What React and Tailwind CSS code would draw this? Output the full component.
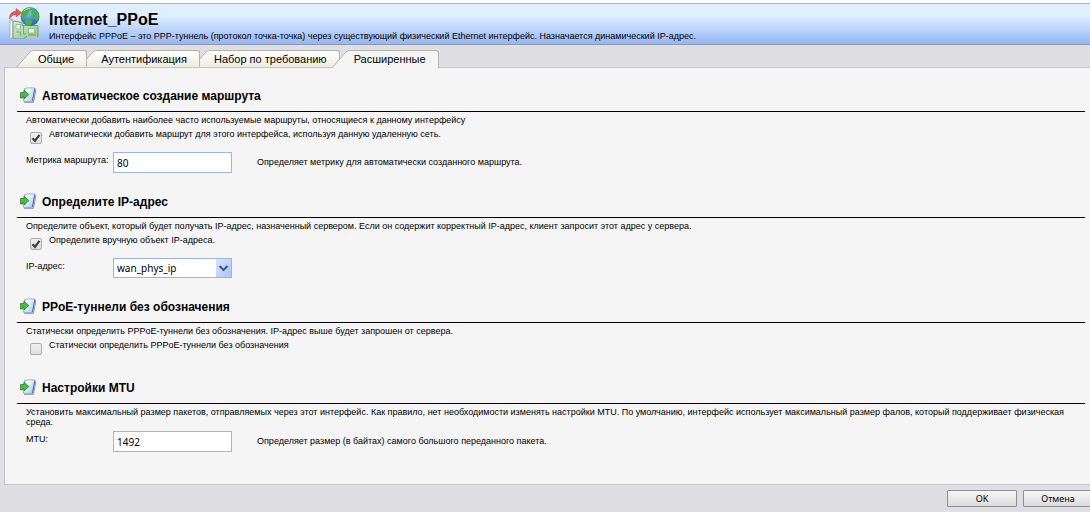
import { useState } from 'react';

const tabs = ['Общие', 'Аутентификация', 'Набор по требованию', 'Расширенные'];

function InterfaceIcon() {
  return (
    <svg width="32" height="33" viewBox="0 0 32 33" className="shrink-0" aria-hidden="true">
      <defs>
        <radialGradient id="globe" cx="0.4" cy="0.3" r="0.8">
          <stop offset="0" stopColor="#8fc4ee" />
          <stop offset="0.5" stopColor="#4a86c8" />
          <stop offset="1" stopColor="#28568f" />
        </radialGradient>
        <linearGradient id="card" x1="0" y1="0" x2="1" y2="1">
          <stop offset="0" stopColor="#d9efd4" />
          <stop offset="1" stopColor="#8cc48c" />
        </linearGradient>
      </defs>
      <path d="M4 14l9 1.500v3h16v11H17.500l-1 1.500H4z" fill="url(#card)" stroke="#69a56c" />
      <path d="M1 12.500h2.500v18.500H1z" fill="#fbfcfb" stroke="#9aa79c" strokeWidth="0.8" />
      <path d="M7 17.500h4.500v4.500H7zM19.500 21.500h6v4.500h-6z" fill="#f3fbf0" stroke="#82b884" strokeWidth="0.8" />
      <path d="M7 25h4.500v3.500M14.500 18v9h2.500M19 28h8" fill="none" stroke="#5fa565" strokeWidth="0.8" />
      <path d="M5 30.500h10M18 29.500h10" stroke="#d8d48c" strokeWidth="0.8" />
      <circle cx="21" cy="9.500" r="9.500" fill="url(#globe)" />
      <path
        d="M12.500 6C14 2.500 17 .5 21 .3l2 2.200-3 1.500-.5 3-3 2.500-2 2.500-2-2zM16 12.500l4-.5 3 2.500-1 3.500-3 .5-3-2.500zM24 2c4 1 6 4.500 6.200 8l-2.200 3.500-3.500-2 .5-3.500-3-2z"
        fill="#46b648"
      />
      <path d="M15 4c2-2 4-2.500 6-2.500" fill="none" stroke="#b9eab0" />
      <path d="M.5 12C0 7 3.500 4.200 7 4.200V1.500l5.500 4.300L7 10V7.500C4 7.300 2.500 9 .5 12z" fill="#e8564e" stroke="#c03a34" strokeWidth="0.5" />
    </svg>
  );
}

function SectionIcon() {
  return (
    <svg width="17" height="17" viewBox="0 0 17 17" className="-mr-px shrink-0" aria-hidden="true">
      <defs>
        <linearGradient id="page" x1="0" y1="0" x2="1" y2="1">
          <stop offset="0.2" stopColor="#ffffff" />
          <stop offset="1" stopColor="#9cc0f4" />
        </linearGradient>
      </defs>
      <path d="M15.800 2.500L13.500 15.300H4" fill="none" stroke="#8d93a0" />
      <path d="M4.500 1.500c3-.8 7-.8 10.500-.3L12.500 14.200c-3 .6-6 .6-9 0z" fill="url(#page)" stroke="#8aa5d4" strokeWidth="0.9" />
      <path d="M14.800 1.600l-2.400 12.600" fill="none" stroke="#4a70ba" />
      <path d="M.5 5.500h3.500V3l4.800 4.500L4 12V9.500H2.500V11h-2z" fill="#4cbb3f" stroke="#248528" strokeWidth="0.8" />
    </svg>
  );
}

function Tab({ label, active, className, onClick }) {
  const fill = active ? '#f5f5f5' : 'url(#tabFill)';
  return (
    <button
      type="button"
      role="tab"
      aria-selected={active}
      onClick={onClick}
      className={`flex text-[11px] leading-4 ${active ? '-mb-px h-[18px]' : 'h-[17px]'} ${className}`}
    >
      <svg
        width="18"
        height="18"
        viewBox="0 0 18 18"
        className="h-full shrink-0"
        preserveAspectRatio="xMidYMin slice"
        aria-hidden="true"
      >
        <defs>
          <linearGradient id="tabFill" x1="0" y1="0" x2="0" y2="1">
            <stop offset="0" stopColor="#ffffff" />
            <stop offset="1" stopColor="#eeeddf" />
          </linearGradient>
        </defs>
        <path d="M0 18L13 3Q15 .5 18 .5V18z" fill={fill} />
        <path d="M0 18L13 3Q15 .5 18 .5" fill="none" stroke="#b4b4ac" />
      </svg>
      <span
        className={`h-full rounded-tr-[3px] border-t border-r border-[#b4b4ac] pr-3 pl-1 whitespace-nowrap ${
          active ? 'bg-[#f5f5f5]' : 'bg-linear-to-b from-white to-[#eeeddf]'
        }`}
      >
        {label}
      </span>
    </button>
  );
}

function Section({ title, description, children }) {
  return (
    <section>
      <h2 className="flex h-7 items-start gap-[6px] border-b border-black pt-[3px] pl-[3px] text-[12px] leading-[18px] font-bold">
        <SectionIcon />
        {title}
      </h2>
      <div className="pl-[9px]">
        <p className="pt-[3px]">{description}</p>
        {children}
      </div>
    </section>
  );
}

function Check({ id, label, defaultChecked }) {
  return (
    <div className="mt-1 flex gap-[7px] pb-1 pl-1">
      <span className="relative mt-[3px] h-3 w-3">
        <input
          id={id}
          type="checkbox"
          defaultChecked={defaultChecked}
          className="peer block h-3 w-3 appearance-none rounded-[2px] border border-[#acacac] bg-linear-to-b from-[#f0f0f0] to-[#dedede]"
        />
        <svg
          viewBox="0 0 12 12"
          className="pointer-events-none absolute inset-0 hidden h-3 w-3 peer-checked:block"
          aria-hidden="true"
        >
          <path d="M2.500 6.200L5 8.800L9.500 2.800" fill="none" stroke="#3c3c3c" strokeWidth="2.200" />
        </svg>
      </span>
      <label htmlFor={id}>{label}</label>
    </div>
  );
}

function Field({ id, label, help, children }) {
  return (
    <div className="mt-1 flex">
      <label htmlFor={id} className="w-[87px] shrink-0 pt-[3px] whitespace-nowrap">
        {label}
      </label>
      {children}
      {help && <span className="pt-[5px] pl-[25px]">{help}</span>}
    </div>
  );
}

function TextBox({ id, defaultValue }) {
  return (
    <input
      id={id}
      type="text"
      defaultValue={defaultValue}
      className="h-[21px] w-[119px] border border-[#9cb7e4] bg-white px-[3px] font-['Noto_Sans',sans-serif] text-[10px] outline-none"
    />
  );
}

export default function App() {
  const [current, setCurrent] = useState(3);

  return (
    <div className="min-h-screen overflow-hidden bg-[#dfdee3] font-['Liberation_Sans',Arial,sans-serif] text-[9px] leading-[10px] text-black">
      <header className="border-t-[3px] border-white">
        <div className="flex h-[42px] gap-2 border-t border-b border-t-[#9db4d4] border-b-[#8f9bab] bg-linear-to-b from-[#e0efff] from-30% to-[#94b6f4] pt-[3px] pl-[9px]">
          <InterfaceIcon />
          <div>
            <h1 className="mt-[3px] mb-px text-[16px] leading-5 font-bold">Internet_PPoE</h1>
            <p>
              Интерфейс PPPoE – это PPP-туннель (протокол точка-точка) через существующий физический Ethernet интерфейс.
              Назначается динамический IP-адрес.
            </p>
          </div>
        </div>
      </header>

      <div role="tablist" className="flex pt-[5px] pl-4">
        {tabs.map((label, i) => (
          <Tab
            key={label}
            label={label}
            active={i === current}
            onClick={() => setCurrent(i)}
            className={`relative ${i > 0 ? '-ml-2' : ''} ${i === current ? 'z-40' : ['z-30', 'z-20', 'z-10', 'z-0'][i]}`}
          />
        ))}
      </div>

      <main className="ml-1 flex flex-col gap-[17px] border-t border-b border-l border-[#c3c3c8] bg-[#f5f5f5] pt-4 pr-[5px] pb-8 pl-3">
        <Section
          title="Автоматическое создание маршрута"
          description="Автоматически добавить наиболее часто используемые маршруты, относящиеся к данному интерфейсу"
        >
          <Check
            id="add-route"
            defaultChecked
            label="Автоматически добавить маршрут для этого интерфейса, используя данную удаленную сеть."
          />
          <Field id="metric" label="Метрика маршрута:" help="Определяет метрику для автоматически созданного маршрута.">
            <TextBox id="metric" defaultValue="80" />
          </Field>
        </Section>

        <Section
          title="Определите IP-адрес"
          description="Определите объект, который будет получать IP-адрес, назначенный сервером. Если он содержит корректный IP-адрес, клиент запросит этот адрес у сервера."
        >
          <Check id="manual-ip" defaultChecked label="Определите вручную объект IP-адреса." />
          <Field id="ip" label="IP-адрес:">
            <span className="relative">
              <select
                id="ip"
                className="block h-5 w-[119px] appearance-none border border-[#9cb7e4] bg-white pl-[3px] font-['Noto_Sans',sans-serif] text-[10px] leading-[18px] outline-none"
              >
                <option>wan_phys_ip</option>
              </select>
              <svg
                width="15"
                height="18"
                viewBox="0 0 15 18"
                className="pointer-events-none absolute top-px right-px bg-linear-to-br from-[#d6e3fc] to-[#abc5f7]"
                aria-hidden="true"
              >
                <path d="M3.500 7l4 4 4-4" fill="none" stroke="#44597f" strokeWidth="2.200" />
              </svg>
            </span>
          </Field>
        </Section>

        <Section
          title="PPoE-туннели без обозначения"
          description="Статически определить PPPoE-туннели без обозначения. IP-адрес выше будет запрошен от сервера."
        >
          <Check id="unnumbered" label="Статически определить PPPoE-туннели без обозначения" />
        </Section>

        <Section
          title="Настройки MTU"
          description="Установить максимальный размер пакетов, отправляемых через этот интерфейс. Как правило, нет необходимости изменять настройки MTU. По умолчанию, интерфейс использует максимальный размер фалов, который поддерживает физическая среда."
        >
          <Field id="mtu" label="MTU:" help="Определяет размер (в байтах) самого большого переданного пакета.">
            <TextBox id="mtu" defaultValue="1492" />
          </Field>
        </Section>
      </main>

      <footer className="-mr-[3px] flex justify-end gap-[6px] pt-[5px]">
        {['OK', 'Отмена'].map((label) => (
          <button
            key={label}
            type="button"
            className="h-[17px] w-[70px] rounded-[1px] border border-[#8e8f8f] bg-linear-to-b from-[#f6f6f6] to-[#dcdcdc] font-['Noto_Sans',sans-serif] text-[9px] leading-[15px]"
          >
            {label}
          </button>
        ))}
      </footer>
    </div>
  );
}
